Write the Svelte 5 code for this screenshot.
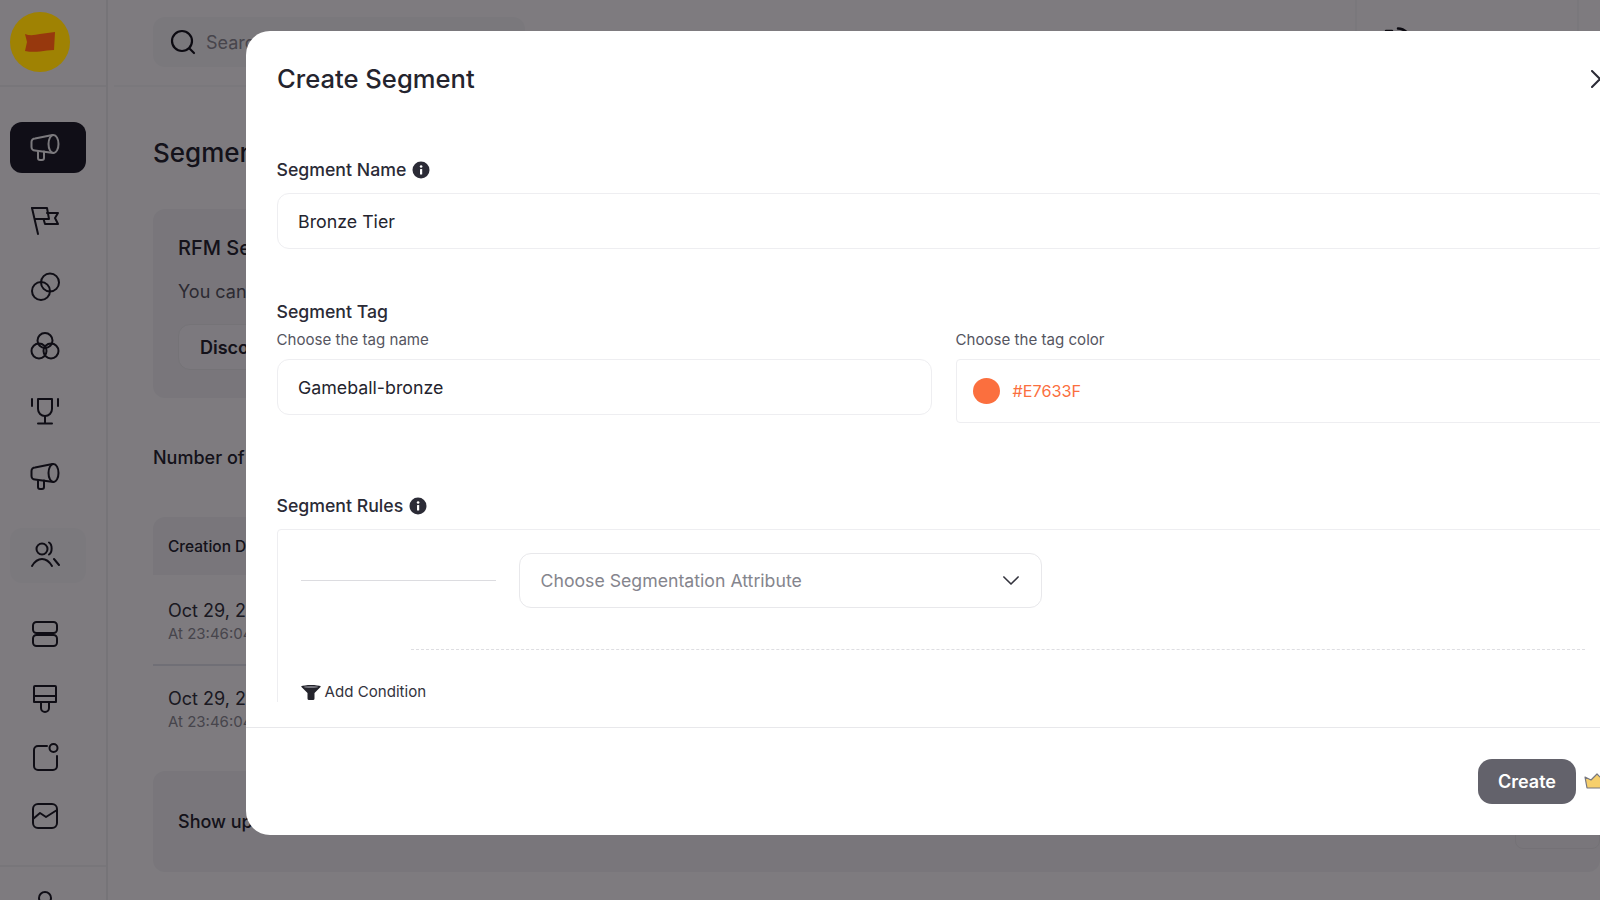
<script>
  const nav = [
    { id: 'mega', h: 51, gap: 35, active: true },
    { id: 'flag', h: 51, gap: 22 },
    { id: 'rings', h: 51, gap: 15 },
    { id: 'trio', h: 51, gap: 8 },
    { id: 'cup', h: 51, gap: 14 },
    { id: 'mega', h: 51, gap: 15 },
    { id: 'people', h: 55, gap: 26, soft: true },
    { id: 'stack', h: 51, gap: 25 },
    { id: 'brush', h: 51, gap: 13 },
    { id: 'note', h: 51, gap: 8 },
    { id: 'chart', h: 51, gap: 8 }
  ];

  let segmentName = $state('Bronze Tier');
  let tagName = $state('Gameball-bronze');
</script>

{#snippet icon(id)}
  <svg class="nav-icon" viewBox="0 0 30 30" fill="none" stroke="currentColor" stroke-width="2" stroke-linecap="round" stroke-linejoin="round">
    {#if id === 'mega'}
      <ellipse cx="23.5" cy="11" rx="5" ry="9" />
      <path d="M22.5 2 5 5.5a3.5 3.5 0 0 0-3.5 3.5v5a3.5 3.5 0 0 0 3.5 3.5L23.5 20" />
      <path d="M8 18v7a2 2 0 0 0 2 2h2a2 2 0 0 0 2-2v-6.500" />
    {:else if id === 'flag'}
      <path d="M2 2 8 28" /><path d="M2 2h15l2 11H5" /><path d="M17 7h11l-3 5 3 6H15l-1.500-5" />
    {:else if id === 'rings'}
      <circle cx="11" cy="19" r="9" /><circle cx="20" cy="10.500" r="9" />
    {:else if id === 'trio'}
      <circle cx="15" cy="9.500" r="7.500" /><circle cx="9" cy="20" r="7.500" /><circle cx="21" cy="20" r="7.500" />
    {:else if id === 'cup'}
      <path d="M8 3h14v10a7 7 0 0 1-14 0z" /><path d="M15 20v7" /><path d="M8 27.500h14" /><path d="M2 3v7" /><path d="M28 3v7" />
    {:else if id === 'people'}
      <circle cx="12" cy="10" r="5.500" /><path d="M2 27c3-5 7-7 10-7s7 2 10 7" /><path d="M19 3.500c3.500 2 3.500 10 0 12" /><path d="M24 20l5 6" />
    {:else if id === 'stack'}
      <rect x="3" y="3" width="24" height="11" rx="3.500" /><rect x="3" y="16" width="24" height="11" rx="3.500" />
    {:else if id === 'brush'}
      <path d="M5 3h20a1 1 0 0 1 1 1v15H4V4a1 1 0 0 1 1-1z" /><path d="M4 13h22" /><path d="M11 19v6a4 4 0 0 0 8 0v-6" />
    {:else if id === 'note'}
      <path d="M17 4H8a4 4 0 0 0-4 4v16a4 4 0 0 0 4 4h15a4 4 0 0 0 4-4V14" /><circle cx="23.500" cy="6" r="4" />
    {:else if id === 'chart'}
      <rect x="3" y="3" width="24" height="24" rx="5" /><path d="M3 18l7-6 6 4 11-7" />
    {/if}
  </svg>
{/snippet}

{#snippet info()}
  <svg class="info" viewBox="0 0 18 18">
    <circle cx="9" cy="9" r="8.500" fill="#2b2b36" />
    <rect x="8" y="8" width="2.200" height="5.500" rx=".5" fill="#fff" />
    <circle cx="9.100" cy="5.500" r="1.300" fill="#fff" />
  </svg>
{/snippet}

<div class="page">
  <aside class="sidebar">
    <div class="logo-wrap">
      <div class="logo">
        <svg viewBox="0 0 32 22" width="32" height="22"><path d="M1 3c5 2 10 1 15 0s10-1 15-2l-1 18c-5 0-9 1-14 1.500S6 21 1 20l2-9z" fill="#97380d" /></svg>
      </div>
    </div>
    <nav class="nav">
      {#each nav as item}
        <div class="nav-item" class:active={item.active} class:soft={item.soft} style:height="{item.h}px" style:margin-top="{item.gap}px">
          {@render icon(item.id)}
        </div>
      {/each}
    </nav>
    <div class="side-foot">
      <svg viewBox="0 0 30 30" width="30" height="30" fill="none" stroke="currentColor" stroke-width="2"><circle cx="15" cy="12" r="6" /></svg>
    </div>
  </aside>

  <main class="main">
    <header class="topbar">
      <div class="search">
        <svg viewBox="0 0 26 26" width="26" height="26" fill="none" stroke="currentColor" stroke-width="2.200" stroke-linecap="round"><circle cx="12" cy="12" r="10" /><path d="M20 20l4 4" /></svg>
        <span>Search</span>
      </div>
      <div class="top-right">
        <svg viewBox="0 0 24 24" width="24" height="24" fill="none" stroke="currentColor" stroke-width="2.500" stroke-linecap="round"><path d="M2 4h6" /><path d="M14 1.500c3 0 6 1 9 4" /></svg>
      </div>
    </header>

    <div class="content">
      <h1>Segments</h1>
      <section class="card rfm">
        <h2>RFM Segments</h2>
        <p>You can discover your RFM segments</p>
        <button class="ghost">Discover</button>
      </section>
      <div class="count">Number of segments</div>
      <div class="thead">Creation Date</div>
      <div class="trow first">
        <div class="date">Oct 29, 2024</div>
        <div class="time">At 23:46:04</div>
      </div>
      <div class="trow">
        <div class="date">Oct 29, 2024</div>
        <div class="time">At 23:46:04</div>
      </div>
      <section class="card show">Show updates</section>
    </div>
    <div class="peek"></div>
  </main>

  <div class="overlay"></div>

  <div class="modal" role="dialog" aria-label="Create Segment">
    <div class="modal-head">
      <h3>Create Segment</h3>
      <svg class="close" viewBox="0 0 18 18" fill="none" stroke="#2b2b36" stroke-width="2" stroke-linecap="round"><path d="M1 1l16 16M17 1 1 17" /></svg>
    </div>

    <div class="form">
      <div class="label first">Segment Name {@render info()}</div>
      <input class="field" bind:value={segmentName} />

      <div class="label tag">Segment Tag</div>
      <div class="tag-grid">
        <div>
          <div class="sub">Choose the tag name</div>
          <input class="field" bind:value={tagName} />
        </div>
        <div>
          <div class="sub">Choose the tag color</div>
          <div class="color-field">
            <span class="swatch"></span>
            <span class="hex">#E7633F</span>
          </div>
        </div>
      </div>

      <div class="label rules">Segment Rules {@render info()}</div>
      <div class="rules-box">
        <div class="rule-row">
          <span class="rule-line"></span>
          <div class="select">
            <span>Choose Segmentation Attribute</span>
            <svg viewBox="0 0 18 10" width="16" height="9" fill="none" stroke="#33333d" stroke-width="1.800" stroke-linecap="round" stroke-linejoin="round"><path d="M1 1l8 8 8-8" /></svg>
          </div>
        </div>
        <div class="dashed"></div>
        <div class="add">
          <svg viewBox="0 0 20 16" width="20" height="16"><path d="M0 2.500C3 .5 17 .5 20 2.500L13.500 9v5.500a1.500 1.500 0 0 1-1.500 1.500H8a1.500 1.500 0 0 1-1.500-1.500V9z" fill="#24242c" /><ellipse cx="10" cy="3" rx="7" ry="1" fill="#77777f" /></svg>
          <span>Add Condition</span>
        </div>
      </div>
    </div>

    <div class="modal-foot">
      <button class="create">Create</button>
      <svg class="crown" viewBox="0 0 26 16" width="26" height="16"><path d="M1 4l6 3 6-6 6 6 6-3-2 11H3z" fill="#f6cf6c" stroke="#77777f" stroke-width="1.200" stroke-linejoin="round" /></svg>
    </div>
  </div>
</div>

<style>
  :global(body) { margin: 0; overflow: hidden; }

  .page {
    position: relative;
    width: 1600px; height: 900px;
    display: flex;
    overflow: hidden;
    background: #f8f7f9;
    font-family: Inter, "Noto Sans", sans-serif;
    color: #24242e;
  }

  /* sidebar */
  .sidebar {
    width: 106px; flex-shrink: 0;
    border-right: 2px solid #e8e8ea;
    display: flex; flex-direction: column;
  }
  .logo-wrap {
    height: 87px;
    padding: 12px 0 0 10px;
    box-sizing: border-box;
    border-bottom: 2px solid #ececee;
    flex-shrink: 0;
  }
  /* logo keeps its strong colours above the dim layer */
  .logo {
    position: relative; z-index: 1;
    width: 60px; height: 60px; border-radius: 50%;
    background: #9f8203;
    display: flex; align-items: center; justify-content: center;
  }
  .nav { display: flex; flex-direction: column; padding-left: 10px; height: 778px; flex-shrink: 0; box-sizing: border-box; }
  .nav-item {
    width: 76px;
    display: flex; align-items: center; justify-content: center;
    border-radius: 12px;
    color: #1b1b24;
    flex-shrink: 0;
  }
  .nav-item.active { background: #1c1c28; color: #f2f2f4; }
  .nav-item.soft { background: #f3f2f5; }
  .nav-icon { width: 30px; height: 30px; margin-left: -6px; }
  .nav-item.soft .nav-icon { margin-top: -3px; }
  .side-foot {
    border-top: 2px solid #ececee;
    padding: 19px 0 0 30px;
    color: #1b1b24;
  }

  /* page behind the dialog */
  .main { flex: 1; min-width: 0; position: relative; }
  .topbar {
    height: 87px; margin-left: 6px;
    box-sizing: border-box;
    border-bottom: 2px solid #f0f0f2;
    display: flex; align-items: flex-start; justify-content: space-between;
    padding-left: 39px;
  }
  .search {
    width: 372px; height: 50px; margin-top: 17px;
    box-sizing: border-box;
    padding-left: 17px;
    border-radius: 12px;
    background: #f1f0f3;
    display: flex; align-items: center; gap: 10px;
    color: #14141c;
    font-size: 18px;
  }
  .search span { color: #8a8a92; }
  .top-right {
    width: 224px; height: 85px; margin-right: 21px;
    box-sizing: border-box;
    border-left: 2px solid #f0f0f2;
    border-right: 2px solid #f0f0f2;
    padding: 27px 0 0 27px;
    color: #14141c;
  }
  .content { padding: 0 0 0 45px; }
  h1 { margin: 50px 0 40px; font-size: 26px; line-height: 32px; font-weight: 550; }
  .card { background: #eeedf0; border-radius: 12px; box-sizing: border-box; }
  .rfm { height: 189px; padding: 26px 25px; }
  h2 { margin: 0 0 19px; font-size: 20px; line-height: 26px; font-weight: 500; }
  .rfm p { margin: 0 0 20px; font-size: 18px; line-height: 24px; color: #55555f; }
  .ghost {
    height: 46px; padding: 0 21px;
    border: 1px solid #e6e6e9; border-radius: 12px;
    background: #f4f3f6;
    font: 600 18px Inter, sans-serif; color: #24242e;
  }
  .count { margin-top: 48px; font-size: 18px; line-height: 24px; font-weight: 450; }
  .thead {
    margin-top: 47px; height: 58px;
    padding-left: 15px;
    display: flex; align-items: center;
    background: #eeedf0; border-radius: 12px 12px 0 0;
    font-size: 15.500px; font-weight: 550;
  }
  .trow { padding: 21px 0 39px 15px; }
  .trow.first { padding-top: 24px; height: 91px; box-sizing: border-box; border-bottom: 2px solid #dcdfe6; }
  .date { font-size: 18px; line-height: 24px; color: #33333d; }
  .time { margin-top: 1px; font-size: 15px; line-height: 20px; color: #8a8a92; }
  .show {
    height: 101px; padding-left: 25px;
    display: flex; align-items: center;
    font-size: 18px; font-weight: 550;
  }
  .peek {
    position: absolute; right: 0; top: 800px;
    width: 83px; height: 47px;
    border: 1px solid #e4e3e6; border-radius: 8px;
  }

  .overlay { position: absolute; inset: 0; background: rgba(4, 0, 6, .5); }

  /* dialog */
  .modal {
    position: absolute; left: 246px; top: 31px;
    width: 1394px; height: 804px;
    background: #fff;
    border-radius: 24px;
    display: flex; flex-direction: column;
    z-index: 2;
  }
  .modal-head {
    height: 96px; flex-shrink: 0;
    box-sizing: border-box;
    padding: 0 31px 2px;
    display: flex; align-items: center; justify-content: space-between;
  }
  h3 { margin: 0; font-size: 25.600px; font-weight: 550; color: #24242e; }
  .close { width: 18px; height: 18px; margin-top: 2px; }

  .form {
    height: 575px; flex-shrink: 0;
    margin-bottom: 25px;
    padding: 0 31px 0 30.500px;
    overflow: hidden;
  }
  .label {
    display: flex; align-items: center; gap: 6px;
    font-size: 17.700px; line-height: 24px; font-weight: 550;
    color: #2b2b36;
  }
  .label.first { margin: 31px 0 11px; }
  .label.tag { margin: 51px 0 6px; }
  .label.rules { margin: 71px 0 11px; }
  .info { width: 18px; height: 18px; }
  .sub { font-size: 15.100px; line-height: 20px; color: #55555f; margin-bottom: 9px; }
  .field {
    display: block;
    width: 100%; height: 56px;
    box-sizing: border-box;
    padding: 0 20.500px;
    border: 1px solid #eeeef1; border-radius: 12px;
    background: #fff;
    font: 400 17.800px Inter, sans-serif; color: #24242e;
    outline: none;
  }
  .tag-grid { display: grid; grid-template-columns: 655px 654px; gap: 24px; }
  .color-field {
    height: 64px;
    box-sizing: border-box;
    padding: 0 16px;
    border: 1px solid #eeeef1; border-radius: 4px;
    display: flex; align-items: center; gap: 13px;
  }
  .swatch { width: 27px; height: 26px; border-radius: 50%; background: #fb6f3e; }
  .hex { font-size: 16.200px; color: #fb6f3e; }

  .rules-box {
    height: 200px;
    box-sizing: border-box;
    padding: 23px 23px;
    border: 1px solid #eeeef1; border-radius: 4px;
  }
  .rule-row { display: flex; align-items: center; gap: 23px; }
  .rule-line { width: 195px; height: 1px; background: #dcdce0; }
  .select {
    width: 523px; height: 55px;
    box-sizing: border-box;
    padding: 0 22px 0 21px;
    border: 1px solid #e8e8eb; border-radius: 12px;
    display: flex; align-items: center; justify-content: space-between;
    font-size: 17.700px; color: #85858d;
  }
  .dashed { margin: 41px 0 0 110px; border-top: 1px dashed #dedee2; }
  .add {
    margin-top: 32px;
    display: flex; align-items: center; gap: 4px;
    font-size: 15.100px; line-height: 20px; color: #33333d;
  }

  .modal-foot {
    flex: 1;
    box-sizing: border-box;
    border-top: 1px solid #e8e8eb;
    padding: 31px 30px 0 0;
    display: flex; justify-content: flex-end; align-items: flex-start; gap: 8px;
  }
  .create {
    width: 98px; height: 45px;
    border: none; border-radius: 14px;
    background: #63626b; color: #fff;
    font: 600 18px Inter, sans-serif;
  }
  .crown { margin-top: 14px; }
</style>
